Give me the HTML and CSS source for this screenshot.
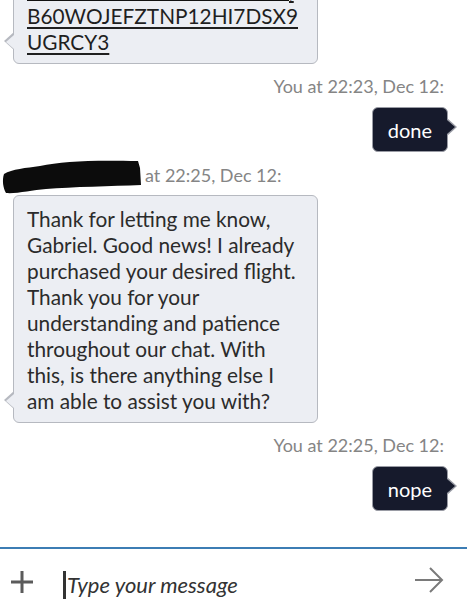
FILE: index.html
```html
<!DOCTYPE html>
<html lang="en">
<head>
  <meta charset="UTF-8" />
  <meta name="viewport" content="width=device-width, initial-scale=1.0"/>
  <title>Chat</title>
  <link rel="stylesheet" href="styles.css">
</head>
<body>
  <div class="chat">
    <div class="thread">

      <div class="bubble incoming first">
        <a class="link"><span class="redacted"></span>,<br>B60WOJEFZTNP12HI7DSX9<br>UGRCY3</a>
      </div>

      <div class="stamp mine">You at 22:23, Dec 12:</div>
      <div class="bubble outgoing">done</div>

      <div class="stamp theirs">
        <span class="agent">
          Agent Name
          <svg class="scribble" width="142" height="38" viewBox="0 0 142 38">
            <path d="M2 16 C 10 11, 24 10, 38 8 C 60 3, 90 2, 136 3 L 138 10 L 139 27 C 110 28, 70 29, 44 31 C 30 32, 14 36, 4 35 C 1 30, 0 22, 2 16 Z" fill="#0c0c0c"/>
          </svg>
        </span>
        at 22:25, Dec 12:
      </div>
      <div class="bubble incoming">
        Thank for letting me know,<br>
        Gabriel. Good news! I already<br>
        purchased your desired flight.<br>
        Thank you for your<br>
        understanding and patience<br>
        throughout our chat. With<br>
        this, is there anything else I<br>
        am able to assist you with?
      </div>

      <div class="stamp mine">You at 22:25, Dec 12:</div>
      <div class="bubble outgoing">nope</div>

    </div>

    <div class="composer">
      <svg class="icon plus" width="24" height="24" viewBox="0 0 24 24">
        <path d="M12 1 V23 M1 12 H23" stroke="#5b5b5b" stroke-width="3" fill="none"/>
      </svg>
      <div class="input">
        <span class="caret"></span>
        <span class="placeholder">Type your message</span>
      </div>
      <svg class="icon send" width="32" height="28" viewBox="0 0 32 28">
        <path d="M2 14 H29 M17 2 L29 14 L17 26" stroke="#7a7a7a" stroke-width="2" fill="none"/>
      </svg>
    </div>
  </div>
</body>
</html>
```

FILE: styles.css
```css
html, body {
  margin: 0;
  padding: 0;
  background: #fff;
}

body {
  font-family: Lato, "Open Sans", sans-serif;
  color: #2b2b2b;
}

.chat {
  width: 467px;
  height: 614px;
  display: flex;
  flex-direction: column;
  overflow: hidden;
}

.thread {
  flex: 1;
  overflow: hidden;
  display: flex;
  flex-direction: column;
}

/* message bubbles */
.bubble {
  position: relative;
  font-size: 20.8px;
  line-height: 26px;
  border-radius: 6px;
}

.incoming {
  align-self: flex-start;
  width: 305px;
  box-sizing: border-box;
  margin-left: 13px;
  padding: 10px 13px 8px;
  background: #eceef3;
  border: 1.5px solid #b6b9c0;
}

.incoming.first {
  margin-top: -34px;
}

.incoming::before,
.incoming::after {
  content: "";
  position: absolute;
  bottom: 13px;
  border-style: solid;
  border-color: transparent;
}

.incoming::before {
  left: -10px;
  border-width: 9px 10px 9px 0;
  border-right-color: #b6b9c0;
}

.incoming::after {
  left: -8px;
  bottom: 14.5px;
  border-width: 7.5px 8.5px 7.5px 0;
  border-right-color: #eceef3;
}

.outgoing {
  align-self: flex-end;
  margin-right: 19px;
  margin-top: 11px;
  height: 45px;
  box-sizing: border-box;
  padding: 0 15px;
  display: flex;
  align-items: center;
  background: #161a2c;
  color: #fff;
  font-size: 20px;
  border: 1.5px solid #9a9ca5;
}

.outgoing::before,
.outgoing::after {
  content: "";
  position: absolute;
  top: 10px;
  border-style: solid;
  border-color: transparent;
}

.outgoing::before {
  right: -10px;
  border-width: 9px 0 9px 10px;
  border-left-color: #9a9ca5;
}

.outgoing::after {
  right: -8px;
  top: 11.5px;
  border-width: 7.5px 0 7.5px 8.5px;
  border-left-color: #161a2c;
}

.link {
  color: #1f1f1f;
  text-decoration: underline;
  text-decoration-thickness: 2px;
  text-underline-offset: 3px;
}

.redacted {
  display: inline-block;
  width: 262px;
  height: 20px;
  background: #111;
  vertical-align: -3px;
}

/* timestamps */
.stamp {
  font-size: 18px;
  line-height: 20px;
  color: #858585;
}

.stamp.mine {
  align-self: flex-end;
  margin-right: 23px;
  margin-top: 12px;
}

.stamp.theirs {
  margin-top: 13px;
  margin-bottom: 10px;
  padding-left: 4px;
  display: flex;
  align-items: center;
  gap: 5px;
}

.agent {
  position: relative;
  width: 136px;
  color: transparent;
  white-space: nowrap;
}

.scribble {
  position: absolute;
  left: -2px;
  top: -7px;
}

/* bottom composer */
.composer {
  height: 65px;
  border-top: 2px solid #3c7db4;
  display: flex;
  align-items: center;
  padding: 0 22px 0 10px;
}

.icon {
  flex: none;
  display: block;
}

.input {
  flex: 1;
  display: flex;
  align-items: center;
  margin-left: 29px;
  margin-top: 6px;
}

.caret {
  width: 3px;
  height: 28px;
  background: #333;
}

.placeholder {
  margin-left: 1px;
  font-style: italic;
  font-size: 22px;
  color: #333;
}

.send {
  margin-top: -4px;
}
```
